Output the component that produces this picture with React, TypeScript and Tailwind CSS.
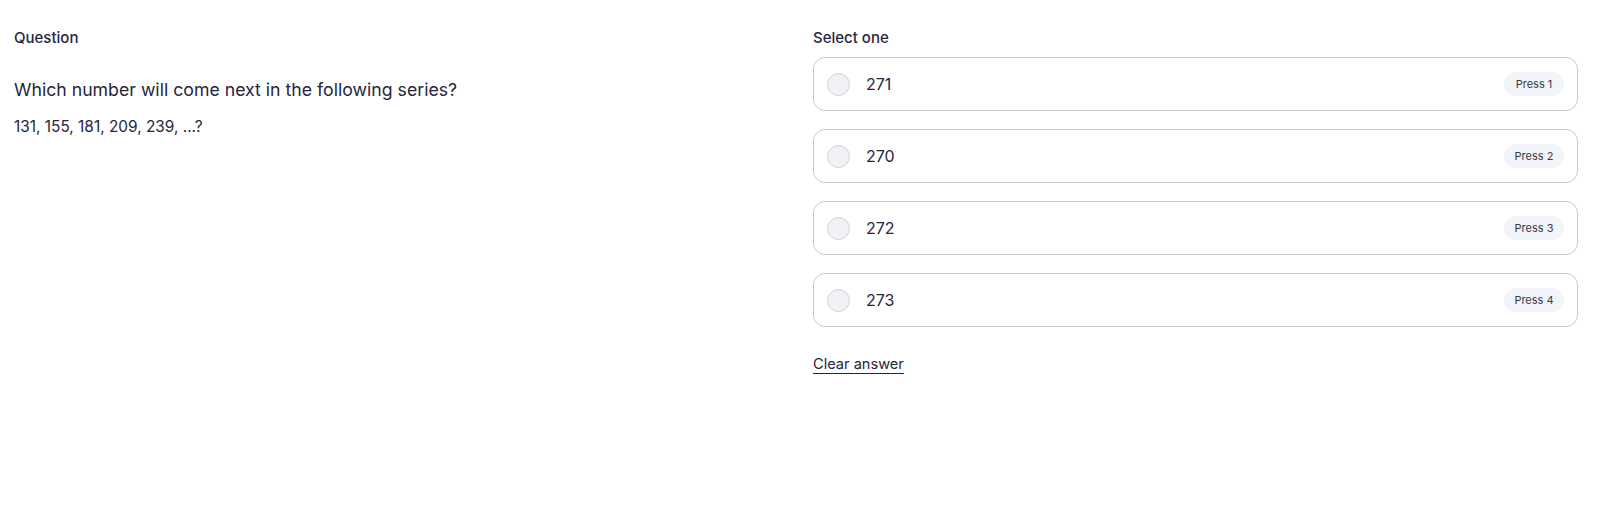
const options = [
  { id: 1, value: "271" },
  { id: 2, value: "270" },
  { id: 3, value: "272" },
  { id: 4, value: "273" },
];

function App() {
  return (
    <div
      className="bg-white w-full h-[527px] pt-[28px] pl-[14px] pr-[22px] grid grid-cols-2 gap-[34px] text-[#27253d]"
      style={{ fontFamily: "Inter, 'Noto Sans', sans-serif" }}
    >
      <div>
        <p className="text-[15px] leading-[20px] font-medium">Question</p>
        <p className="mt-[29px] text-[17.7px] leading-[26px]">
          Which number will come next in the following series?
        </p>
        <p className="mt-[11px] text-[15.4px] leading-[26px]">131, 155, 181, 209, 239, ...?</p>
      </div>

      <div>
        <p className="text-[15px] leading-[20px] font-medium">Select one</p>
        <div className="mt-[9px] flex flex-col gap-[18px]">
          {options.map((opt) => (
            <label
              key={opt.id}
              className="h-[54px] flex items-center border border-[#c9c9ce] rounded-[12px] pl-[13px] pr-[13px] cursor-pointer"
            >
              <span className="w-[23px] h-[23px] rounded-full border border-[#cfd1d6] bg-[#f0f2f6]" />
              <span className="ml-[16px] text-[16px]">{opt.value}</span>
              <span className="ml-auto h-[24px] w-[60px] rounded-full bg-[#f1f4f8] flex items-center justify-center text-[11px] text-[#3a3a4a]">
                Press {opt.id}
              </span>
            </label>
          ))}
        </div>
        <button className="mt-[29px] text-[14.6px] leading-[17px] border-b border-[#27253d]">
          Clear answer
        </button>
      </div>
    </div>
  );
}

export default App;
